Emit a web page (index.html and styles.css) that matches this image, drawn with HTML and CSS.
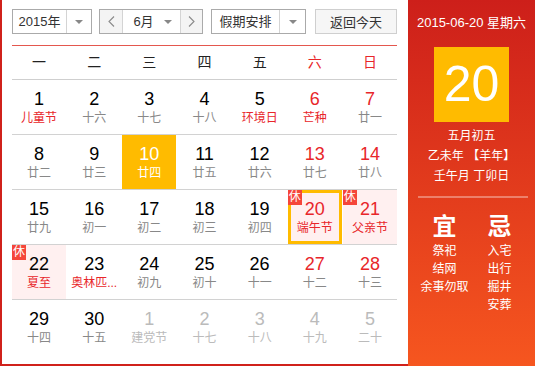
FILE: index.html
```html
<!DOCTYPE html>
<html lang="zh-CN">
<head>
    <meta charset="UTF-8">
    <meta name="viewport" content="width=device-width, initial-scale=1.0">
    <title>万年历</title>
    <link rel="stylesheet" href="styles.css">
</head>
<body>
    <div class="calendar">
        <div class="main">
            <div class="toolbar">
                <div class="select year">
                    <span class="select-text">2015年</span>
                    <span class="select-arrow"><i class="caret"></i></span>
                </div>
                <div class="month-group">
                    <span class="nav-btn prev">
                        <svg width="7" height="11" viewBox="0 0 7 11"><polyline points="6,0.5 1,5.5 6,10.5" fill="none" stroke="#8a8a8a" stroke-width="1.1"/></svg>
                    </span>
                    <div class="select month">
                        <span class="select-text">6月</span>
                        <span class="select-arrow"><i class="caret"></i></span>
                    </div>
                    <span class="nav-btn next">
                        <svg width="7" height="11" viewBox="0 0 7 11"><polyline points="1,0.5 6,5.5 1,10.5" fill="none" stroke="#8a8a8a" stroke-width="1.1"/></svg>
                    </span>
                </div>
                <div class="select holiday">
                    <span class="select-text">假期安排</span>
                    <span class="select-arrow"><i class="caret"></i></span>
                </div>
                <button class="today-btn">返回今天</button>
            </div>

            <div class="weekdays">
                <span>一</span>
                <span>二</span>
                <span>三</span>
                <span>四</span>
                <span>五</span>
                <span class="weekend">六</span>
                <span class="weekend">日</span>
            </div>

            <div class="week">
                <div class="day"><span class="num">1</span><span class="lunar fest">儿童节</span></div>
                <div class="day"><span class="num">2</span><span class="lunar">十六</span></div>
                <div class="day"><span class="num">3</span><span class="lunar">十七</span></div>
                <div class="day"><span class="num">4</span><span class="lunar">十八</span></div>
                <div class="day"><span class="num">5</span><span class="lunar fest">环境日</span></div>
                <div class="day weekend"><span class="num">6</span><span class="lunar fest">芒种</span></div>
                <div class="day weekend"><span class="num">7</span><span class="lunar">廿一</span></div>
            </div>
            <div class="week">
                <div class="day"><span class="num">8</span><span class="lunar">廿二</span></div>
                <div class="day"><span class="num">9</span><span class="lunar">廿三</span></div>
                <div class="day today"><span class="num">10</span><span class="lunar">廿四</span></div>
                <div class="day"><span class="num">11</span><span class="lunar">廿五</span></div>
                <div class="day"><span class="num">12</span><span class="lunar">廿六</span></div>
                <div class="day weekend"><span class="num">13</span><span class="lunar">廿七</span></div>
                <div class="day weekend"><span class="num">14</span><span class="lunar">廿八</span></div>
            </div>
            <div class="week">
                <div class="day"><span class="num">15</span><span class="lunar">廿九</span></div>
                <div class="day"><span class="num">16</span><span class="lunar">初一</span></div>
                <div class="day"><span class="num">17</span><span class="lunar">初二</span></div>
                <div class="day"><span class="num">18</span><span class="lunar">初三</span></div>
                <div class="day"><span class="num">19</span><span class="lunar">初四</span></div>
                <div class="day weekend rest selected"><i class="badge">休</i><span class="num">20</span><span class="lunar fest">端午节</span></div>
                <div class="day weekend rest"><i class="badge">休</i><span class="num">21</span><span class="lunar fest">父亲节</span></div>
            </div>
            <div class="week">
                <div class="day rest"><i class="badge">休</i><span class="num">22</span><span class="lunar fest">夏至</span></div>
                <div class="day"><span class="num">23</span><span class="lunar fest">奥林匹...</span></div>
                <div class="day"><span class="num">24</span><span class="lunar">初九</span></div>
                <div class="day"><span class="num">25</span><span class="lunar">初十</span></div>
                <div class="day"><span class="num">26</span><span class="lunar">十一</span></div>
                <div class="day weekend"><span class="num">27</span><span class="lunar">十二</span></div>
                <div class="day weekend"><span class="num">28</span><span class="lunar">十三</span></div>
            </div>
            <div class="week last">
                <div class="day"><span class="num">29</span><span class="lunar">十四</span></div>
                <div class="day"><span class="num">30</span><span class="lunar">十五</span></div>
                <div class="day other"><span class="num">1</span><span class="lunar">建党节</span></div>
                <div class="day other"><span class="num">2</span><span class="lunar">十七</span></div>
                <div class="day other"><span class="num">3</span><span class="lunar">十八</span></div>
                <div class="day other"><span class="num">4</span><span class="lunar">十九</span></div>
                <div class="day other"><span class="num">5</span><span class="lunar">二十</span></div>
            </div>
        </div>

        <div class="side">
            <div class="side-date">2015-06-20 星期六</div>
            <div class="side-day">20</div>
            <div class="side-lunar">
                <div>五月初五</div>
                <div>乙未年 【羊年】</div>
                <div>壬午月 丁卯日</div>
            </div>
            <div class="side-line"></div>
            <div class="almanac">
                <div class="almanac-col">
                    <div class="almanac-title">宜</div>
                    <div>祭祀</div>
                    <div>结网</div>
                    <div>余事勿取</div>
                </div>
                <div class="almanac-col">
                    <div class="almanac-title">忌</div>
                    <div>入宅</div>
                    <div>出行</div>
                    <div>掘井</div>
                    <div>安葬</div>
                </div>
            </div>
        </div>
    </div>
</body>
</html>
```

FILE: styles.css
```css
body {
    margin: 0;
    background: #fff;
    font-family: "Liberation Sans", "Noto Sans CJK SC", sans-serif;
    color: #000;
}

.calendar {
    display: flex;
    width: 535px;
    height: 366px;
}

/* left part: toolbar + month grid */
.main {
    box-sizing: border-box;
    width: 408px;
    height: 366px;
    padding: 9px 0 0 10px;
    border-left: 2px solid #d0211b;
    border-bottom: 2px solid #d0211b;
}

.toolbar {
    display: flex;
    width: 385px;
    height: 25px;
    margin-bottom: 11px;
    font-size: 13px;
    color: #333;
}

.select {
    box-sizing: border-box;
    display: flex;
    height: 25px;
    border: 1px solid #aaa;
    background: #fff;
}

.select-text {
    flex: 1;
    text-align: center;
    line-height: 23px;
}

.select-arrow {
    display: flex;
    align-items: center;
    justify-content: center;
    width: 24px;
    border-left: 1px solid #d4d4d4;
}

.caret {
    width: 0;
    height: 0;
    border-left: 4px solid transparent;
    border-right: 4px solid transparent;
    border-top: 4px solid #888;
}

.year {
    width: 80px;
}

.month-group {
    box-sizing: border-box;
    display: flex;
    width: 104px;
    height: 25px;
    margin-left: 7px;
    border: 1px solid #aaa;
}

.nav-btn {
    display: flex;
    align-items: center;
    justify-content: center;
    width: 22px;
    background: #f4f4f4;
}

.nav-btn.prev {
    border-right: 1px solid #d4d4d4;
}

.nav-btn.next {
    width: 21px;
    border-left: 1px solid #d4d4d4;
}

.month {
    flex: 1;
    height: 23px;
    border: none;
}

.month .select-text {
    padding-left: 8px;
}

.month .select-arrow {
    border-left: none;
}

.holiday {
    width: 95px;
    margin-left: 8px;
}

.holiday .select-arrow {
    width: 25px;
}

.today-btn {
    box-sizing: border-box;
    width: 82px;
    height: 25px;
    margin-left: 9px;
    padding: 0;
    border: 1px solid #cfcfcf;
    background: #f6f6f6;
    font-family: inherit;
    font-size: 13px;
    color: #333;
}

.weekdays {
    display: grid;
    grid-template-columns: repeat(7, 1fr);
    column-gap: 1px;
    width: 385px;
    height: 33px;
    border-top: 1px solid #e4574e;
    border-bottom: 1px solid #cfcfcf;
    font-size: 14px;
    line-height: 33px;
    text-align: center;
    color: #222;
}

.weekdays .weekend {
    color: #e8262a;
}

.week {
    display: grid;
    grid-template-columns: repeat(7, 1fr);
    column-gap: 1px;
    width: 385px;
    height: 54px;
    border-bottom: 1px solid #d2d2d2;
}

.week.last {
    border-bottom: none;
}

.day {
    position: relative;
    box-sizing: border-box;
    padding-top: 8px;
    text-align: center;
}

.num {
    display: block;
    font-size: 18px;
    line-height: 22px;
}

.lunar {
    display: block;
    font-size: 12px;
    line-height: 17px;
    color: #888;
    white-space: nowrap;
}

.day.weekend .num,
.lunar.fest {
    color: #e8262a;
}

.day.rest {
    background: #fff0f0;
}

.day.today {
    background: #ffbb00;
}

.day.today .num,
.day.today .lunar {
    color: #fff;
}

.day.selected {
    box-shadow: inset 0 0 0 3px #ffbb00;
}

.day.other .num,
.day.other .lunar {
    color: #bbb;
}

.badge {
    position: absolute;
    top: 0;
    left: 0;
    width: 14px;
    height: 15px;
    background: #f5463a;
    color: #fff;
    font-style: normal;
    font-size: 12px;
    line-height: 14px;
    text-align: center;
}

/* right part: selected day details */
.side {
    box-sizing: border-box;
    width: 127px;
    height: 366px;
    padding-top: 14px;
    background: linear-gradient(#cd1f1a, #f6561f);
    color: #fff;
    text-align: center;
}

.side-date {
    font-size: 13px;
    line-height: 18px;
}

.side-day {
    width: 75px;
    height: 75px;
    margin: 15px auto 0;
    background: #ffbb00;
    font-size: 50px;
    line-height: 75px;
}

.side-lunar {
    margin-top: 4px;
    font-size: 12px;
    line-height: 20px;
}

.side-line {
    height: 2px;
    margin: 10px 7px 0 10px;
    background: rgba(255, 255, 255, 0.35);
}

.almanac {
    display: flex;
    padding: 14px 8px 0 9px;
    font-size: 12px;
    line-height: 18px;
}

.almanac-col {
    width: 55px;
}

.almanac-title {
    font-size: 24px;
    line-height: 30px;
    font-weight: bold;
}
```
